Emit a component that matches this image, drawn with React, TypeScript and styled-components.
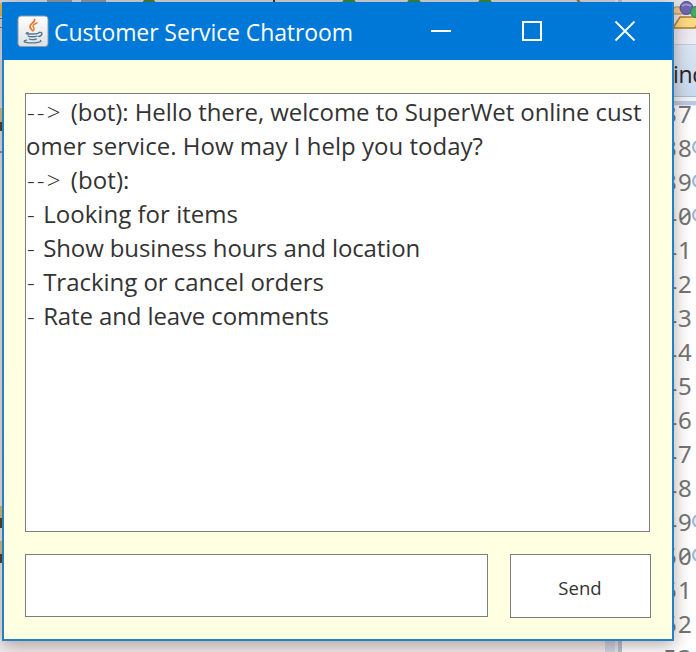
import React from 'react';
import styled, { createGlobalStyle } from 'styled-components';

const GlobalStyle = createGlobalStyle`
  * { box-sizing: border-box; }
  body { margin: 0; overflow: hidden; font-family: 'Open Sans', 'Noto Sans', sans-serif; }
`;

const Desktop = styled.div`
  position: relative;
  width: 696px;
  height: 652px;
  overflow: hidden;
  background: #eceaec;
`;

const Ide = styled.div`
  display: flex;
  height: 100%;
`;

const Explorer = styled.div`
  flex: 0 0 605px;
  display: flex;
  flex-direction: column;
  background: linear-gradient(#d4d5da 0, #dce3eb 60px, #e9e8e9 180px, #f1eded 100%);
`;

const ToolStrip = styled.svg`
  display: block;
  flex: none;
  width: 605px;
  height: 652px;
`;

const Splitter = styled.div`
  flex: 0 0 17px;
  border-left: 10px solid #cdd6e5;
  border-right: 4px solid #b5c3d7;
  background: #e6e6ec;
`;

const Editor = styled.div`
  flex: 1;
  min-width: 0;
  display: flex;
  flex-direction: column;
  background: #fff;
`;

const EditorTools = styled.div`
  flex: 0 0 45px;
  display: flex;
  justify-content: flex-end;
  background: linear-gradient(#e5e5eb, #eeecf4);
  border-bottom: 1px solid #c5cbd7;

  svg { display: block; flex: none; }
`;

const EditorTab = styled.div`
  flex: 0 0 52px;
  padding-left: 51px;
  font-size: 23px;
  line-height: 59px;
  letter-spacing: -0.3px;
  white-space: nowrap;
  overflow: hidden;
  color: #252528;
  background: linear-gradient(#dae5f3, #c9daee);
  border-bottom: 1px solid #a9bbd1;
`;

const TabEdge = styled.div`
  flex: 0 0 9px;
  background: #b9c9de;
  border-top: 4px solid #f0f2f7;
  border-bottom: 1px solid #e4eaf2;
`;

const Gutter = styled.div`
  display: flex;
  flex-direction: column;
  margin-top: -9px;
  padding-left: 41px;
`;

const GutterLine = styled.div`
  flex: 0 0 34px;
  display: flex;
  align-items: center;
  height: 34px;
  font-family: 'Noto Sans', 'Open Sans', sans-serif;
  font-size: 24px;
  line-height: 34px;
  letter-spacing: 1.3px;
  font-feature-settings: 'zero', 'tnum';
  color: #747474;
`;

const FoldMark = styled.span`
  flex: none;
  width: 14px;
  height: 14px;
  margin: -3px 0 0 -1px;
  border: 2px solid #9fb4cf;
  border-radius: 50%;
  background: #e4edf8;
`;

const AppWindow = styled.main`
  position: absolute;
  top: 2px;
  left: 2px;
  width: 672px;
  height: 639px;
  display: flex;
  flex-direction: column;
  border: 2px solid #2381c4;
  border-top: 0;
  background: #ffffe1;
  box-shadow: 0 4px 16px rgba(60, 30, 20, 0.38);
`;

const TitleBar = styled.header`
  flex: 0 0 58px;
  display: flex;
  align-items: center;
  margin: 0 0 0 -2px;
  padding-left: 15px;
  background: #0078d7;
  color: #fff;
`;

const JavaIcon = styled.svg`
  flex: none;
  width: 32px;
  height: 32px;
  margin-top: -1px;
`;

const Title = styled.h1`
  flex: 1;
  margin: 2px 0 0 5px;
  font-size: 23px;
  font-weight: 400;
  line-height: 32px;
  letter-spacing: -0.09px;
  white-space: nowrap;
`;

const WindowControls = styled.div`
  display: flex;
`;

const ControlButton = styled.button`
  width: 92px;
  height: 58px;
  padding: 0;
  border: 0;
  background: transparent;
  color: #fff;

  svg { display: block; width: 92px; height: 58px; }
`;

const Content = styled.div`
  flex: 1;
  display: flex;
  flex-direction: column;
  gap: 22px;
  padding: 33px 21px 21px;
`;

const ChatLog = styled.section`
  flex: 0 0 439px;
  width: 625px;
  padding-top: 1px;
  border: 1px solid #7a8080;
  background: #fff;
`;

const ChatLine = styled.div<{ $spacing: number }>`
  height: 34px;
  font-size: 24px;
  line-height: 34px;
  letter-spacing: ${({ $spacing }) => $spacing}px;
  white-space: pre;
  color: #333;
`;

const Marker = styled.span<{ $spacing: number }>`
  padding-left: 1px;
  font-weight: 300;
  letter-spacing: ${({ $spacing }) => $spacing}px;
`;

const Composer = styled.form`
  display: flex;
  align-items: flex-start;
  gap: 22px;
`;

const MessageInput = styled.input`
  flex: 0 0 463px;
  height: 63px;
  padding: 0 4px;
  border: 1px solid #7a8080;
  outline: 0;
  background: #fff;
  font: 24px 'Open Sans', sans-serif;
`;

const SendButton = styled.button`
  flex: 0 0 141px;
  height: 64px;
  padding: 3px 1px 0 0;
  border: 1px solid #7a8080;
  border-radius: 0;
  background: #fff;
  color: #333;
  font: 18.5px/24px 'Open Sans', sans-serif;
  letter-spacing: 0.1px;
`;

type Line = { marker?: '--> ' | '- '; text: string; spacing: number };

const chat: Line[] = [
  { marker: '--> ', text: '(bot): Hello there, welcome to SuperWet online cust', spacing: -0.07 },
  { text: 'omer service. How may I help you today?', spacing: 0.02 },
  { marker: '--> ', text: '(bot):', spacing: 0.1 },
  { marker: '- ', text: 'Looking for items', spacing: 0.03 },
  { marker: '- ', text: 'Show business hours and location', spacing: -0.12 },
  { marker: '- ', text: 'Tracking or cancel orders', spacing: -0.03 },
  { marker: '- ', text: 'Rate and leave comments', spacing: -0.12 },
];

const lineNumbers = Array.from({ length: 17 }, (_, i) => 37 + i);
const folded = [38, 39, 40, 49, 50];

export default function App() {
  return (
    <Desktop>
      <GlobalStyle />
      <Ide>
        <Explorer>
          <ToolStrip viewBox="0 0 605 652" aria-hidden="true">
            <path d="M47 0h25M81 0h25" stroke="#8b95a3" strokeWidth="4" />
            <circle cx="149" cy="5" r="7" fill="#487a32" />
            <path d="M274 0v2" stroke="#333" strokeWidth="2" />
            <circle cx="349" cy="6" r="8" fill="#2f8a35" />
            <circle cx="414" cy="6" r="8" fill="#2f8a35" />
            <circle cx="485" cy="6" r="8" fill="#2f8a35" />
            <path d="M577 0l3 2" stroke="#867127" strokeWidth="2" />
            <path d="M0 3h2v13H0z" fill="#e1b84a" />
            <path d="M0 18h2v1H0zM0 27h2v1H0z" fill="#68727f" />
            <path d="M0 108h2v22H0zM0 506h2v22H0zM0 541h2v22H0z" fill="#d8c082" />
            <path d="M0 122h2v9H0zM0 518h2v10H0zM0 554h2v9H0z" fill="#4c4128" />
            <path d="M0 152h2" stroke="#64a0ca" strokeWidth="2" />
          </ToolStrip>
        </Explorer>
        <Splitter />
        <Editor>
          <EditorTools>
            <svg width="24" height="44" viewBox="0 0 24 44" aria-hidden="true">
              <path d="M0 11l3-4h10v7H0z" fill="#ecc891" stroke="#b9853f" />
              <path d="M1 28l7-11h22l-7 11z" fill="#fbdc83" stroke="#b07832" strokeWidth="1.4" />
              <circle cx="14.500" cy="8" r="6.500" fill="#7065b2" stroke="#4b438e" />
              <path d="M10 6q4-3 9 0" fill="none" stroke="#a49bd5" strokeWidth="2" />
              <circle cx="24" cy="12" r="5.500" fill="#42a967" stroke="#2c8048" />
            </svg>
          </EditorTools>
          <EditorTab>inc</EditorTab>
          <TabEdge />
          <Gutter>
            {lineNumbers.map((n) => (
              <GutterLine key={n}>
                {n}
                {folded.includes(n) && <FoldMark />}
              </GutterLine>
            ))}
          </Gutter>
        </Editor>
      </Ide>

      <AppWindow>
        <TitleBar>
          <JavaIcon viewBox="0 0 32 32" aria-hidden="true">
            <defs>
              <linearGradient id="tile" x1="0" y1="0" x2="0" y2="1">
                <stop offset="0" stopColor="#fff" />
                <stop offset="1" stopColor="#dedfe1" />
              </linearGradient>
            </defs>
            <rect x="1" y="1" width="30" height="30.500" rx="3" fill="url(#tile)" stroke="#8b9aab" />
            <g fill="none" strokeLinecap="round">
              <path d="M17.500 4.500c1.200 3-5.500 4.300-4.500 7.500.3 1.300 1.700 2.500 2.400 3.600" stroke="#e8792b" strokeWidth="1.700" />
              <path d="M20 8c-4.500 1.500-4.600 3-3.200 4.700.8 1.100.3 2.100-.6 3" stroke="#e8792b" strokeWidth="1.400" />
              <path d="M11 17.700c-3.600.8-1.600 1.500 4.600 1.300 2.200 0 4.400-.3 5.600-.7M11.300 21.100c1.500.9 6.500.8 8.700.1M12.300 24c1.500.9 5.400.8 7 .1M22 17.500c4.300-1 3.400 3.300-.2 4" stroke="#4e7894" strokeWidth="1.400" />
              <path d="M9.500 25.200c-7 1.800 2.500 3.100 8.500 2.600 4.200-.3 7-1.200 5.500-2.300" stroke="#4e7894" strokeWidth="1.300" />
            </g>
          </JavaIcon>
          <Title>Customer Service Chatroom</Title>
          <WindowControls>
            <ControlButton aria-label="Minimize">
              <svg viewBox="0 0 92 58"><path d="M35 29h20" stroke="currentColor" strokeWidth="2" /></svg>
            </ControlButton>
            <ControlButton aria-label="Maximize">
              <svg viewBox="0 0 92 58"><rect x="35" y="20" width="18" height="18" fill="none" stroke="currentColor" strokeWidth="2" /></svg>
            </ControlButton>
            <ControlButton aria-label="Close">
              <svg viewBox="0 0 92 58"><path d="M35.500 19.500l19 19m0-19l-19 19" stroke="currentColor" strokeWidth="1.800" /></svg>
            </ControlButton>
          </WindowControls>
        </TitleBar>
        <Content>
          <ChatLog>
            {chat.map(({ marker, text, spacing }) => (
              <ChatLine key={text} $spacing={spacing}>
                {marker && <Marker $spacing={marker === '- ' ? 1.1 : 2.1}>{marker}</Marker>}
                {text}
              </ChatLine>
            ))}
          </ChatLog>
          <Composer onSubmit={(e) => e.preventDefault()}>
            <MessageInput aria-label="Message" />
            <SendButton type="submit">Send</SendButton>
          </Composer>
        </Content>
      </AppWindow>
    </Desktop>
  );
}
